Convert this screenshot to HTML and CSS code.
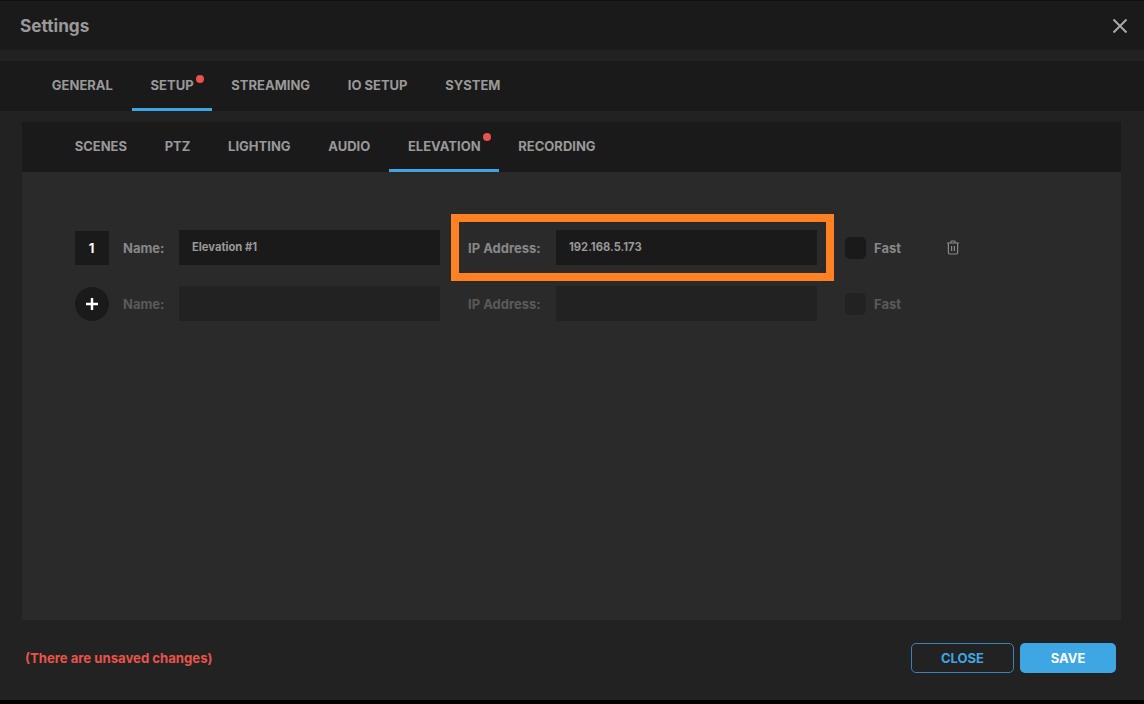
FILE: index.html
```html
<!DOCTYPE html>
<html lang="en">
<head>
    <meta charset="UTF-8">
    <title>Settings</title>
    <link rel="stylesheet" href="styles.css">
</head>
<body>
    <div class="modal">
        <div class="modal-header">
            <span class="modal-title">Settings</span>
            <svg class="close-icon" width="16" height="16" viewBox="0 0 16 16">
                <path d="M1.5 1.5 L14.5 14.5 M14.5 1.5 L1.5 14.5" />
            </svg>
        </div>

        <div class="tabs main-tabs">
            <div class="tab">GENERAL</div>
            <div class="tab active">SETUP<span class="dot"></span></div>
            <div class="tab">STREAMING</div>
            <div class="tab">IO SETUP</div>
            <div class="tab">SYSTEM</div>
        </div>

        <div class="panel">
            <div class="tabs sub-tabs">
                <div class="tab">SCENES</div>
                <div class="tab">PTZ</div>
                <div class="tab">LIGHTING</div>
                <div class="tab">AUDIO</div>
                <div class="tab active">ELEVATION<span class="dot"></span></div>
                <div class="tab">RECORDING</div>
            </div>

            <div class="panel-body">
                <div class="row">
                    <div class="index">1</div>
                    <label class="label name-label">Name:</label>
                    <div class="input">Elevation #1</div>
                    <label class="label ip-label">IP Address:</label>
                    <div class="input">192.168.5.173</div>
                    <div class="checkbox"></div>
                    <label class="label fast-label">Fast</label>
                    <svg class="trash" width="14" height="15" viewBox="0 0 14 15">
                        <path d="M1 3 H13 M5 3 V1.6 Q5 1 5.6 1 H8.4 Q9 1 9 1.6 V3 M2.4 3 V12.6 Q2.4 14 3.8 14 H10.2 Q11.6 14 11.6 12.6 V3 M5.6 6 V11 M8.4 6 V11" />
                    </svg>
                    <div class="highlight"></div>
                </div>
                <div class="row row-new">
                    <div class="add">
                        <svg width="14" height="14" viewBox="0 0 14 14">
                            <path d="M7 1 V13 M1 7 H13" />
                        </svg>
                    </div>
                    <label class="label name-label">Name:</label>
                    <div class="input"></div>
                    <label class="label ip-label">IP Address:</label>
                    <div class="input"></div>
                    <div class="checkbox"></div>
                    <label class="label fast-label">Fast</label>
                </div>
            </div>
        </div>

        <div class="modal-footer">
            <span class="unsaved">(There are unsaved changes)</span>
            <div class="buttons">
                <button class="btn btn-close">CLOSE</button>
                <button class="btn btn-save">SAVE</button>
            </div>
        </div>
    </div>
</body>
</html>
```

FILE: styles.css
```css
body {
    margin: 0;
    background-color: #000;
    font-family: Inter, "Noto Sans", sans-serif;
    overflow: hidden;
}
.modal {
    width: 1144px;
    height: 700px;
    background-color: #222;
    display: flex;
    flex-direction: column;
}
.modal-header {
    height: 50px;
    background-color: #1a1a1a;
    border-top: 1px solid #111;
    box-sizing: border-box;
    display: flex;
    align-items: center;
    justify-content: space-between;
    padding: 0 16px 0 20px;
}
.modal-title {
    font-size: 17.2px;
    font-weight: 700;
    color: #999;
}
.close-icon path {
    stroke: #aaa;
    stroke-width: 2;
    fill: none;
}
.tabs {
    height: 50px;
    background-color: #1a1a1a;
    display: flex;
    box-sizing: border-box;
}
.main-tabs {
    margin-top: 11px;
    padding-left: 33px;
}
.sub-tabs {
    padding-left: 33.8px;
}
.tab {
    position: relative;
    padding: 0 18.85px;
    font-size: 13px;
    font-weight: 700;
    line-height: 49px;
    color: #999;
}
.tab.active {
    border-bottom: 3px solid #3ea6e3;
    height: 50px;
    box-sizing: border-box;
}
.dot {
    position: absolute;
    top: 14px;
    right: 8px;
    width: 8px;
    height: 8px;
    border-radius: 50%;
    background-color: #e8534a;
}
.sub-tabs .dot {
    top: 11px;
}
.panel {
    margin: 11px 23px 0 22px;
    height: 498px;
    display: flex;
    flex-direction: column;
}
.panel-body {
    flex: 1;
    background-color: #2a2a2a;
    padding: 58px 0 0 53px;
    display: flex;
    flex-direction: column;
    gap: 21px;
}
.row {
    position: relative;
    height: 35px;
    display: flex;
    align-items: center;
}
.index {
    width: 33px;
    height: 34px;
    padding-right: 1px;
    background-color: #1a1a1a;
    color: #fff;
    font-size: 13px;
    font-weight: 700;
    text-align: center;
    line-height: 34px;
}
.add {
    width: 34px;
    height: 34px;
    border-radius: 50%;
    background-color: #1a1a1a;
    display: flex;
    align-items: center;
    justify-content: center;
}
.add path {
    stroke: #fff;
    stroke-width: 2.4;
    fill: none;
}
.label {
    font-size: 13px;
    font-weight: 700;
    color: #888;
    box-sizing: border-box;
}
.name-label {
    width: 70px;
    padding-left: 14px;
}
.ip-label {
    width: 116px;
    padding-left: 28px;
}
.fast-label {
    padding-left: 8px;
}
.input {
    width: 261px;
    height: 35px;
    background-color: #1a1a1a;
    padding-left: 13px;
    box-sizing: border-box;
    font-size: 11.2px;
    font-weight: 700;
    line-height: 35px;
    color: #999;
}
.checkbox {
    width: 21px;
    height: 22px;
    margin-left: 28px;
    border-radius: 5px;
    background-color: #1a1a1a;
}
.trash {
    margin-left: 45px;
}
.trash path {
    stroke: #888;
    stroke-width: 1.2;
    fill: none;
}
.row-new .label {
    color: #5a5a5a;
}
.row-new .input {
    background-color: #222;
}
.row-new .checkbox {
    background-color: #222;
}
.highlight {
    position: absolute;
    left: 376px;
    top: -16px;
    width: 383px;
    height: 67px;
    border: 8px solid #ff8124;
    box-sizing: border-box;
}
.modal-footer {
    flex: 1;
    display: flex;
    align-items: center;
    justify-content: space-between;
    padding: 0 28px 4px 25px;
}
.unsaved {
    font-size: 13.15px;
    font-weight: 700;
    color: #e8534a;
}
.buttons {
    display: flex;
    gap: 6px;
}
.btn {
    height: 30px;
    border-radius: 5px;
    font-family: inherit;
    font-size: 13px;
    font-weight: 700;
    box-sizing: border-box;
}
.btn-close {
    width: 103px;
    background-color: transparent;
    border: 1px solid #3a84b3;
    color: #3ea6e3;
}
.btn-save {
    width: 96px;
    background-color: #3ea6e3;
    border: none;
    color: #fff;
}
```
